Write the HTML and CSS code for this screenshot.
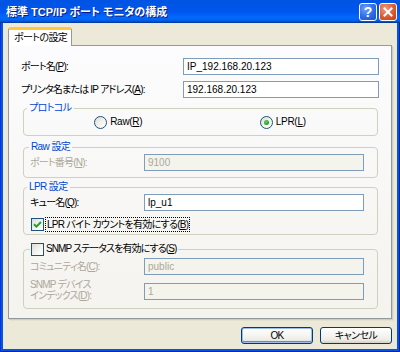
FILE: index.html
```html
<!DOCTYPE html>
<html lang="ja">
<head>
<meta charset="utf-8">
<title>標準 TCP/IP ポート モニタの構成</title>
<link rel="stylesheet" href="styles.css">
</head>
<body>
<div class="window">
  <div class="titlebar">
    <span class="title">標準 TCP/IP ポート モニタの構成</span>
    <div class="caption-buttons">
      <span class="cbtn help">?</span>
      <span class="cbtn close"><svg width="10" height="10" viewBox="0 0 10 10"><path d="M1.5 1.5 L8.5 8.5 M8.5 1.5 L1.5 8.5" stroke="#fff" stroke-width="2" stroke-linecap="square"/></svg></span>
    </div>
  </div>
  <div class="frame">
    <div class="client">
      <div class="tabs"><div class="tab">ポートの設定</div></div>
      <div class="panel">
        <div class="row top-row"><span class="lbl">ポート名(<u>P</u>):</span><span class="edit">IP_192.168.20.123</span></div>
        <div class="row top-row second"><span class="lbl">プリンタ名または IP アドレス(<u>A</u>):</span><span class="edit">192.168.20.123</span></div>

        <fieldset class="group proto">
          <legend>プロトコル</legend>
          <div class="radios">
            <span class="radio-item"><span class="radio"></span><span>Raw(<u>R</u>)</span></span>
            <span class="radio-item"><span class="radio checked"></span><span>LPR(<u>L</u>)</span></span>
          </div>
        </fieldset>

        <fieldset class="group raw">
          <legend>Raw 設定</legend>
          <div class="row grp-row disabled"><span class="lbl">ポート番号(<u>N</u>):</span><span class="edit">9100</span></div>
        </fieldset>

        <fieldset class="group lpr">
          <legend>LPR 設定</legend>
          <div class="row grp-row"><span class="lbl">キュー名(<u>Q</u>):</span><span class="edit">lp_u1</span></div>
          <div class="check-row"><span class="check checked"><svg width="9" height="9" viewBox="0 0 9 9"><path d="M1 4.2 L3.4 6.6 L8 2" fill="none" stroke="#21A121" stroke-width="2"/></svg></span><span class="focus">LPR バイト カウントを有効にする(<u>B</u>)</span></div>
        </fieldset>

        <fieldset class="group snmp">
          <legend><span class="check"></span><span class="cjk">SNMP ステータスを有効にする(<u>S</u>)</span></legend>
          <div class="row grp-row disabled"><span class="lbl">コミュニティ名(<u>C</u>):</span><span class="edit">public</span></div>
          <div class="row grp-row disabled two"><span class="lbl">SNMP デバイス<br>インデックス(<u>D</u>):</span><span class="edit">1</span></div>
        </fieldset>
      </div>
      <div class="buttons">
        <span class="btn default">OK</span>
        <span class="btn">キャンセル</span>
      </div>
    </div>
  </div>
</div>
</body>
</html>
```
FILE: styles.css
```css
* { box-sizing: border-box; }
html, body { margin: 0; padding: 0; }
body {
  width: 400px;
  height: 352px;
  overflow: hidden;
  background: #fff;
  font-family: "Liberation Sans", "Noto Sans CJK JP", sans-serif;
  font-size: 10px;
  letter-spacing: -0.6px;
  font-feature-settings: "palt";
  color: #000;
}
u { text-decoration: underline; text-underline-offset: 1px; }

.window {
  width: 400px;
  height: 352px;
  display: flex;
  flex-direction: column;
}

.titlebar {
  height: 23px;
  flex: none;
  display: flex;
  align-items: center;
  justify-content: space-between;
  padding: 0 3px 0 6px;
  background: linear-gradient(to bottom, #0054E3 0%, #0055EB 45%, #005BF5 60%, #026AFE 75%, #0062EF 87%, #0052D6 93%, #0040AB 97%, #003092 100%);
}
.title {
  color: #fff;
  font-weight: bold;
  font-size: 11px;
  letter-spacing: 0;
  line-height: 14px;
  text-shadow: 1px 1px 0 #0A1883;
  white-space: nowrap;
}
.caption-buttons {
  display: flex;
  gap: 2px;
  margin-top: 1px;
}
.cbtn {
  width: 18px;
  height: 18px;
  border: 1px solid #fff;
  border-radius: 3px;
  display: flex;
  align-items: center;
  justify-content: center;
  color: #fff;
  font-family: "Liberation Sans", sans-serif;
  font-weight: bold;
  font-size: 14px;
  letter-spacing: 0;
  line-height: 1;
}
.help {
  background: radial-gradient(circle at 35% 30%, #6FA0F8 0%, #2E6BE6 55%, #1A4FD0 100%);
}
.close {
  background: radial-gradient(circle at 35% 30%, #F09A7C 0%, #DE5A33 55%, #C23B12 100%);
}

.frame {
  flex: 1;
  display: flex;
  background: #0055E5;
  border-left: 1px solid #0831D9;
  border-right: 1px solid #001EA0;
  border-bottom: 1px solid #001EA0;
  padding: 0 2px 2px 2px;
}
.client {
  flex: 1;
  display: flex;
  flex-direction: column;
  background: #ECE9D8;
  padding: 4px 5px 5px 5px;
}

.tabs {
  display: flex;
  height: 19px;
  margin-bottom: -1px;
  position: relative;
  z-index: 1;
}
.tab {
  height: 19px;
  padding: 1px 4px 0 5px;
  background: #fff;
  border: 1px solid #919B9C;
  border-bottom: none;
  border-top: 3px solid #FFC83C;
  border-radius: 3px 3px 0 0;
  line-height: 13px;
  white-space: nowrap;
}

.panel {
  flex: 1;
  border: 1px solid #919B9C;
  background: linear-gradient(to bottom, #FCFCFE 0%, #F4F3EE 100%);
  box-shadow: 1px 1px 0 #D0CEBF, 2px 2px 0 #E3E0D0;
  padding: 12px 12px 0 12px;
}

.row {
  display: grid;
  align-items: center;
  height: 17px;
}
.top-row { grid-template-columns: 162px 196px; }
.top-row.second { margin-top: 6px; }
.lbl { white-space: nowrap; line-height: 13px; letter-spacing: -0.8px; }
.cjk { letter-spacing: -0.9px; }

.edit {
  height: 17px;
  border: 1px solid #7F9DB9;
  background: #fff;
  padding: 0 3px;
  line-height: 15px;
  letter-spacing: 0;
  white-space: nowrap;
  overflow: hidden;
}

.group {
  margin: 0 1px 0 2px;
  border: 1px solid #D0D0BF;
  border-radius: 4px;
  padding: 0 12px 0 6px;
  min-width: 0;
}
.group legend {
  color: #0046D5;
  line-height: 14px;
  padding: 0 2px;
  margin-left: -3px;
}
.proto { margin-top: 3px; padding-bottom: 6px; }
.radios {
  display: grid;
  grid-template-columns: 1fr 1fr;
  justify-items: center;
  height: 14px;
  align-items: center;
  padding-left: 6px;
}
.radio-item {
  display: flex;
  align-items: center;
  gap: 3px;
  line-height: 14px;
  letter-spacing: -0.3px;
}
.radio {
  width: 13px;
  height: 13px;
  border: 1px solid #1C5180;
  border-radius: 50%;
  background: linear-gradient(135deg, #DCDCD7 0%, #F5F5F3 60%, #FFFFFF 100%);
  display: inline-flex;
  align-items: center;
  justify-content: center;
  flex: none;
}
.radio.checked::after {
  content: "";
  width: 5px;
  height: 5px;
  border-radius: 50%;
  background: radial-gradient(circle at 40% 35%, #5CD15C 0%, #21A121 70%);
}

.grp-row { grid-template-columns: 114px 220px; }
.raw { margin-top: 4px; padding-bottom: 6px; }
.raw legend { margin-left: -1px; }
.disabled .lbl { color: #ACA899; }
.disabled .edit {
  color: #ACA899;
  background: #F4F3EC;
}

.lpr { margin-top: 2px; padding-bottom: 3px; }
.check-row {
  display: flex;
  align-items: center;
  gap: 2px;
  margin-top: 7px;
  height: 13px;
  padding-left: 1px;
}
.check {
  width: 13px;
  height: 13px;
  border: 1px solid #1C5180;
  background: linear-gradient(135deg, #DCDCD7 0%, #F5F5F3 60%, #FFFFFF 100%);
  display: inline-flex;
  align-items: center;
  justify-content: center;
  flex: none;
}
.focus {
  outline: 1px dotted #000;
  outline-offset: 0;
  line-height: 13px;
  padding: 0 1px;
  letter-spacing: -0.7px;
  white-space: nowrap;
}

.snmp { margin-top: 7px; padding-top: 2px; padding-bottom: 9px; }
.snmp legend {
  color: #000;
  display: flex;
  align-items: center;
  gap: 2px;
  padding: 0 2px 0 1px;
  margin-left: 0;
  white-space: nowrap;
}
.snmp .grp-row + .grp-row { margin-top: 6px; }
.two { height: 18px; }
.two .lbl { line-height: 11px; margin-top: -2px; }

.buttons {
  display: flex;
  justify-content: flex-end;
  gap: 7px;
  margin-top: 8px;
}
.btn {
  width: 72px;
  height: 17px;
  border: 1px solid #003C74;
  border-radius: 3px;
  background: linear-gradient(to bottom, #FFFFFF 0%, #F5F4EF 50%, #ECEBE6 80%, #D6D0C5 100%);
  display: flex;
  align-items: center;
  justify-content: center;
  line-height: 13px;
}
.btn.default {
  box-shadow: inset 0 0 0 1px #9DBBEB, inset 0 -1px 0 1px #6982EE;
}
```
